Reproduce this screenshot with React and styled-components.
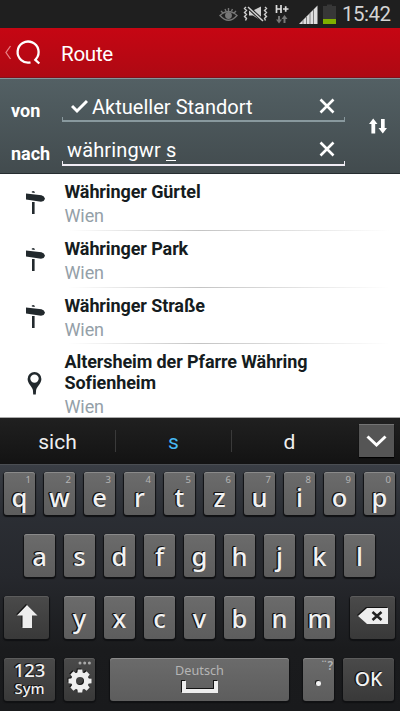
import React from "react";
import styled, { createGlobalStyle } from "styled-components";

const GlobalStyle = createGlobalStyle`
  * { box-sizing: border-box; }
  body { margin: 0; background: #1b1c1e; font-family: Roboto, "Liberation Sans", sans-serif; }
`;

const Screen = styled.main`
  width: 400px;
  height: 711px;
  overflow: hidden;
  display: flex;
  flex-direction: column;
`;

const StatusBar = styled.header`
  height: 28px;
  flex: none;
  background: #1f1f1f;
  display: flex;
  justify-content: flex-end;
  padding-right: 9px;
`;

const StatusIcons = styled.svg`
  width: 122px;
  height: 28px;
  flex: none;
`;

const Clock = styled.time`
  width: 49px;
  margin-left: 2px;
  font-size: 20.5px;
  line-height: 28px;
  letter-spacing: -0.5px;
  color: #d4d4d4;
  white-space: nowrap;
`;

const TitleBar = styled.div`
  height: 50px;
  flex: none;
  display: flex;
  align-items: center;
  background: linear-gradient(#c60613, #ae0913);
  border-bottom: 1px solid #85101a;
  color: #fff;
`;

const BackLogo = styled.svg`
  width: 42px;
  height: 49px;
  flex: none;
`;

const Title = styled.h1`
  margin: 3px 0 0 19px;
  font-size: 20.6px;
  font-weight: 400;
  line-height: 26px;
  letter-spacing: -0.3px;
`;

const SearchForm = styled.section`
  height: 96px;
  flex: none;
  display: flex;
  background: linear-gradient(#536064, #424b4e);
  border-top: 1px solid #82979c;
  border-bottom: 1px solid #262d30;
  color: #fff;
`;

const Fields = styled.div`
  width: 345px;
  padding-top: 12px;
`;

const FieldRow = styled.div`
  height: 42.5px;
  display: flex;
`;

const Label = styled.label`
  width: 62px;
  padding: 8px 0 0 11px;
  font-size: 18px;
  font-weight: 700;
  line-height: 24px;
`;

const Field = styled.div`
  width: 283px;
  height: ${(p) => (p.$active ? "32px" : "31px")};
  display: flex;
  padding: 3px 10px 0 ${(p) => (p.$active ? "5px" : "9px")};
  font-size: 20px;
  line-height: 26px;
  letter-spacing: ${(p) => (p.$active ? "0.13px" : "0.02px")};
  border-bottom: 2px solid ${(p) => (p.$active ? "#f0ecf4" : "#89999e")};
  background:
    linear-gradient(${(p) => (p.$active ? "#f0ecf4, #f0ecf4" : "#89999e, #89999e")}) left bottom / 1px 3px no-repeat,
    linear-gradient(${(p) => (p.$active ? "#f0ecf4, #f0ecf4" : "#89999e, #89999e")}) right bottom / 1px 3px no-repeat;
`;

const Value = styled.span`
  flex: 1;
  white-space: nowrap;
`;

const Composing = styled.span`
  border-bottom: 1px solid #fff;
  display: inline-block;
  height: 24px;
`;

const CheckIcon = styled.svg`
  width: 17px;
  height: 16px;
  margin: 4px 4px 0 0;
`;

const ClearIcon = styled.svg`
  width: 16px;
  height: 16px;
  margin-top: 4px;
`;

const SwapIcon = styled.svg`
  width: 20px;
  height: 18px;
  margin: 38px 0 0 23px;
`;

const Results = styled.ul`
  height: 244px;
  flex: none;
  list-style: none;
  margin: 0;
  padding: 0;
  overflow: hidden;
  background: #fff;
  border-bottom: 1px solid #aaa;
`;

const Result = styled.li`
  display: flex;
  min-height: 56.8px;
  padding-top: 7px;
  background: linear-gradient(90deg, #fff0 68px, #c4c4c4 50%, #fff0 390px) bottom / 100% 1px no-repeat;
`;

const PlaceIcon = styled.svg`
  width: 24px;
  height: 26px;
  margin: ${(p) => (p.$tall ? "18.5px" : "9px")} 16.5px 0 24px;
  flex: none;
`;

const PlaceName = styled.div`
  color: #151c20;
  font-size: 18px;
  font-weight: 700;
  line-height: 21px;
  letter-spacing: -0.1px;
`;

const PlaceCity = styled.div`
  color: #94a0a8;
  font-size: 18px;
  line-height: 27px;
  letter-spacing: -0.1px;
`;

const Suggestions = styled.div`
  height: 46px;
  flex: none;
  display: flex;
  align-items: center;
  background: linear-gradient(#202020, #131313);
`;

const Suggestion = styled.div`
  width: ${(p) => p.$width}px;
  height: 22px;
  line-height: 24px;
  text-align: center;
  font-size: 21px;
  color: ${(p) => (p.$selected ? "#46b9f5" : "#efefef")};
  border-left: ${(p) => (p.$divided ? "1px solid #3a3a3a" : "0")};
`;

const ExpandButton = styled.button`
  width: 35px;
  height: 33px;
  margin: 0 0 1px 12px;
  padding: 0;
  border: 0;
  border-top: 1px solid #737373;
  background: #555;
  box-shadow: 0 1px 1px #000;
`;

const Keyboard = styled.div`
  height: 247px;
  flex: none;
  display: flex;
  flex-direction: column;
  gap: 18.5px;
  padding-top: 7px;
  background: linear-gradient(#3a3e45, #2b2e34 20%, #26282d 45%, #1a1b1d 75%, #191a1c);
  border-top: 1px solid #4b4e53;
`;

const KeyRow = styled.div`
  display: flex;
  gap: 9px;
  height: 43.5px;
  padding-left: ${(p) => p.$inset}px;
`;

const Key = styled.button`
  position: relative;
  flex: none;
  width: ${(p) => p.$width || 31}px;
  height: 43px;
  margin: 0 ${(p) => p.$after || 0}px 0 ${(p) => p.$before || 0}px;
  padding: ${(p) => (p.$hinted ? "7px" : "0")} 0 0;
  display: flex;
  flex-direction: column;
  align-items: center;
  justify-content: center;
  border: 0;
  border-radius: 3px;
  color: #f2f2f2;
  font-family: "Noto Sans", "Open Sans", sans-serif;
  font-weight: 500;
  font-size: 25.5px;
  line-height: 24px;
  text-shadow: -1px -1px 0 #111, -1.5px -0.5px 0 #111;
  background: ${(p) => (p.$dark ? "linear-gradient(#4a4a4a, #393939)" : "linear-gradient(#6b6b6b, #5d5d5d)")};
  box-shadow:
    inset 0 1px 0 ${(p) => (p.$dark ? "#5c5c5c" : "#8a8a8a")},
    0 1px 1px 1px #101113;
`;

const Hint = styled.span`
  position: absolute;
  top: 3px;
  right: 4px;
  font-size: 9.5px;
  line-height: 10px;
  font-weight: 400;
  color: #b5b5b5;
  text-shadow: none;
`;

const CornerMark = styled.svg`
  position: absolute;
  top: 3px;
  right: 4px;
`;

const QuestionHint = styled(Hint)`
  top: 2px;
  right: 1px;
  font-size: 12px;
  line-height: 12px;
  font-weight: 600;
`;

const SmallLabel = styled.span`
  font-size: ${(p) => p.$size}px;
  line-height: 18px;
  margin-top: ${(p) => p.$shift || 0}px;
  font-weight: 500;
`;

const Language = styled.span`
  margin-top: -3px;
  font-size: 12.7px;
  line-height: 16px;
  font-weight: 400;
  color: #b5b5b5;
  text-shadow: none;
`;

const Dot = styled.span`
  width: 4.5px;
  height: 4.5px;
  margin-top: 8px;
  border-radius: 50%;
  background: #f2f2f2;
  box-shadow: -1px -1px 0 #222;
`;

const KeyIcon = styled.svg`
  display: block;
  margin: ${(p) => p.$margin || "0"};
  filter: drop-shadow(-1px -1px 0 #141414);
`;

function StatusGlyphs() {
  return (
    <StatusIcons viewBox="218 0 122 28">
      <g fill="none" stroke="#777" strokeWidth="1.4">
        <path d="M220 15.500q8.500-8 17 0q-8.500 9.500-17 0zM221 11l2 2M225 9l1 2M228.500 8v3M232.500 9l-1 2M236 11l-2 2" />
        <circle cx="228.500" cy="15.500" r="2.700" fill="#777" />
      </g>
      <g fill="none" stroke="#cfcfcf" strokeWidth="1.4">
        <path d="M246 7l-1.500 1.500 2 2-2 2 2 2-2 2 2 2-1 2M265 7l1.500 1.500-2 2 2 2-2 2 2 2-2 2 1 2" />
        <path d="M249 10.500h4l8-4v14l-8-5h-4z" fill="#cfcfcf" stroke="none" />
        <path d="M248 7l15 14" stroke="#1f1f1f" strokeWidth="3.600" />
        <path d="M248 7l15 14" strokeWidth="1.500" />
      </g>
      <path d="M276.500 5v8M281 5v8M276.500 9h4.500M283 9h5.500M285.700 6.200v5.600" stroke="#ddd" strokeWidth="1.700" />
      <path d="M279 16v5M284.500 23v-5" stroke="#777" strokeWidth="2" />
      <path d="M276 19.500h6l-3 4zM281.500 19h6l-3-4z" fill="#777" />
      <path d="M299 24L317.500 5.500V24z" fill="#dedede" />
      <path d="M303 20v4M306.500 17v7M310 13v11M313.500 9v15" stroke="#666" strokeWidth=".8" />
      <path d="M323 6h4V4.500h5V6h4v18h-13z" fill="#373737" />
      <path d="M323 19h13v5h-13z" fill="#7fae00" />
    </StatusIcons>
  );
}

function Cross() {
  return (
    <ClearIcon viewBox="0 0 16 16">
      <path d="M1.500 1.500l13 13M14.500 1.500l-13 13" stroke="#fff" strokeWidth="2.600" />
    </ClearIcon>
  );
}

function Place({ name, city, station }) {
  return (
    <Result>
      {station ? (
        <PlaceIcon viewBox="24 190 24 26" fill="#22292d">
          <path d="M26 193.500L41.500 195.300L43.800 196.500L45 198.800L43.600 201L41 201.800L26 199.600z" />
          <path d="M31.800 192.600v-1.100l1.500-.6 1.400.9v1.100zM32 202h2.600v12H32z" />
        </PlaceIcon>
      ) : (
        <PlaceIcon $tall viewBox="24 370 24 26" fill="#22292d">
          <path fillRule="evenodd" d="M34.500 372a6.900 6.900 0 0 1 6.900 6.900c0 4.500-4.200 6.900-5.300 11.100l-.3 4.500h-2.600l-.3-4.500c-1.100-4.200-5.300-6.600-5.300-11.100a6.900 6.900 0 0 1 6.900-6.900zm0 2.400a4.200 4.200 0 1 0 0 8.400 4.200 4.200 0 0 0 0-8.400z" />
        </PlaceIcon>
      )}
      <div>
        {name.map((line) => <PlaceName key={line}>{line}</PlaceName>)}
        <PlaceCity>{city}</PlaceCity>
      </div>
    </Result>
  );
}

const letterKeys = (letters) => [...letters].map((c) => <Key key={c}>{c}</Key>);

export default function App() {
  return (
    <Screen>
      <GlobalStyle />
      <StatusBar>
        <StatusGlyphs />
        <Clock>15:42</Clock>
      </StatusBar>
      <TitleBar>
        <BackLogo viewBox="0 28 42 49" fill="none">
          <path d="M10.500 46L6 52.500l4.500 6.500" stroke="#e98287" strokeWidth="1.300" />
          <path d="M30.500 62.300A10.500 10.500 0 1 1 36 59L35.300 59.800L39.300 63.500" stroke="#fff" strokeWidth="2.300" />
        </BackLogo>
        <Title>Route</Title>
      </TitleBar>
      <SearchForm>
        <Fields>
          <FieldRow>
            <Label>von</Label>
            <Field>
              <CheckIcon viewBox="0 0 17 16" fill="none">
                <path d="M1 8l5 5L16 3" stroke="#fff" strokeWidth="3" />
              </CheckIcon>
              <Value>Aktueller Standort</Value>
              <Cross />
            </Field>
          </FieldRow>
          <FieldRow>
            <Label>nach</Label>
            <Field $active>
              <Value>währingwr <Composing>s</Composing></Value>
              <Cross />
            </Field>
          </FieldRow>
        </Fields>
        <SwapIcon viewBox="0 0 20 18" fill="#fff">
          <path d="M1 7l4.200-5.500L9.500 7H7.200v9.500H3.400V7zM10.500 11h2.500V2h3.700v9H19l-4.200 5.500z" />
        </SwapIcon>
      </SearchForm>
      <Results>
        <Place station name={["Währinger Gürtel"]} city="Wien" />
        <Place station name={["Währinger Park"]} city="Wien" />
        <Place station name={["Währinger Straße"]} city="Wien" />
        <Place name={["Altersheim der Pfarre Währing", "Sofienheim"]} city="Wien" />
      </Results>
      <Suggestions>
        <Suggestion $width={115}>sich</Suggestion>
        <Suggestion $width={116} $divided $selected>s</Suggestion>
        <Suggestion $width={116} $divided>d</Suggestion>
        <ExpandButton>
          <svg width="35" height="30" viewBox="0 0 35 30" fill="none">
            <path d="M8.500 11.500l9 8.500 9-8.500" stroke="#fff" strokeWidth="3" />
          </svg>
        </ExpandButton>
      </Suggestions>
      <Keyboard>
        <KeyRow $inset={4}>
          {[..."qwertzuiop"].map((c, i) => (
            <Key key={c} $hinted>{c}<Hint>{(i + 1) % 10}</Hint></Key>
          ))}
        </KeyRow>
        <KeyRow $inset={24}>{letterKeys("asdfghjkl")}</KeyRow>
        <KeyRow $inset={4}>
          <Key $dark $width={45} $after={6}>
            <KeyIcon width="22" height="24" viewBox="0 0 22 24" $margin="-4px 0 0">
              <path d="M11 1l10.500 10.500H16V24H6.500V11.500H1z" fill="#eee" />
            </KeyIcon>
          </Key>
          {letterKeys("yxcvbnm")}
          <Key $dark $width={45} $before={6}>
            <KeyIcon width="30" height="16" viewBox="0 0 30 16" $margin="-3px 0 0">
              <path d="M9 0h21v16H9L0 8z" fill="#eee" />
              <path d="M14.500 4l9 8M23.500 4l-9 8" stroke="#222" strokeWidth="2.500" />
            </KeyIcon>
          </Key>
        </KeyRow>
        <KeyRow $inset={4}>
          <Key $dark $width={51}>
            <SmallLabel $size={18.5} $shift={-2}>123</SmallLabel>
            <SmallLabel $size={14.8}>Sym</SmallLabel>
          </Key>
          <Key $dark $after={6}>
            <CornerMark width="13" height="4" viewBox="0 0 13 4" fill="#aaa">
              <circle cx="2" cy="2" r="1.500" /><circle cx="6.700" cy="2" r="1.500" /><circle cx="11.400" cy="2" r="1.500" />
            </CornerMark>
            <KeyIcon width="24" height="24" viewBox="-12 -12 24 24" $margin="2px 0 0">
              <circle r="6.500" fill="none" stroke="#eee" strokeWidth="5" />
              {[0, 45, 90, 135].map((a) => (
                <path key={a} d="M-2.200-11.500h4.400l.6 4h-5.600zM-2.200 11.500h4.400l.6-4h-5.600z" fill="#eee" transform={`rotate(${a})`} />
              ))}
            </KeyIcon>
          </Key>
          <Key $width={179} $after={5}>
            <Language>Deutsch</Language>
            <KeyIcon width="36" height="13" viewBox="0 0 36 13" $margin="3px 0 0">
              <path d="M2 0v10h32V0" fill="none" stroke="#eee" strokeWidth="4" />
            </KeyIcon>
          </Key>
          <Key>
            <QuestionHint>¨?</QuestionHint>
            <Dot />
          </Key>
          <Key $dark $width={51}>
            <SmallLabel $size={19.5} $shift={-2}>OK</SmallLabel>
          </Key>
        </KeyRow>
      </Keyboard>
    </Screen>
  );
}
